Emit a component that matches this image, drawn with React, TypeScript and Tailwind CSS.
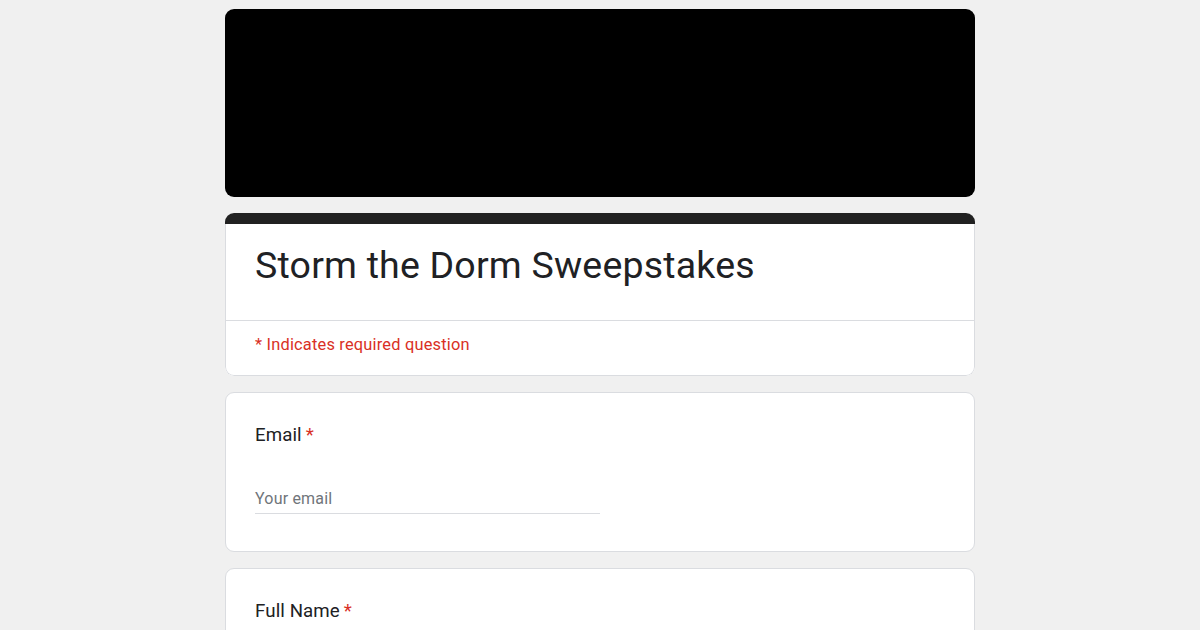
const roboto = { fontFamily: "Roboto, 'Open Sans', sans-serif" };

function Required() {
  return <span className="text-[#d93025] ml-[4px]">*</span>;
}

function QuestionCard({ label, placeholder }: { label: string; placeholder?: string }) {
  return (
    <div className="bg-white border border-[#dadce0] rounded-[9px] px-[29px] pt-[28px] pb-[37px]">
      <div className="text-[18.7px] leading-[28px] text-[#202124] tracking-[0.1px]" style={roboto}>
        {label}
        <Required />
      </div>
      {placeholder && (
        <div className="mt-[38px] w-1/2 border-b border-[#dadce0] pb-[2px]">
          <span className="text-[16px] leading-6 text-[#70757a] tracking-[0.2px]">{placeholder}</span>
        </div>
      )}
    </div>
  );
}

export default function App() {
  return (
    <div className="min-h-[630px] bg-[#f0f0f0] pt-[9px] font-['Roboto',sans-serif]">
      <div className="w-[750px] mx-auto flex flex-col">
        <div className="h-[188px] bg-black rounded-[9px]" />

        <div className="mt-[16px] rounded-[9px] overflow-hidden bg-white">
          <div className="h-[11px] bg-[#212121]" />
          <div className="border border-t-0 border-[#dadce0] rounded-b-[9px]">
            <div className="px-[29px] pt-[18px] pb-[31px] border-b border-[#dadce0]">
              <h1 className="text-[37.5px] leading-[47px] text-[#202124] tracking-[0.2px]" style={roboto}>
                Storm the Dorm Sweepstakes
              </h1>
            </div>
            <div className="px-[29px] pt-[12px] pb-[18px] text-[16.4px] leading-6 text-[#d93025] tracking-[0.2px]">
              * Indicates required question
            </div>
          </div>
        </div>

        <div className="mt-[16px] flex flex-col gap-[16px]">
          <QuestionCard label="Email" placeholder="Your email" />
          <QuestionCard label="Full Name" placeholder="Your answer" />
        </div>
      </div>
    </div>
  );
}
